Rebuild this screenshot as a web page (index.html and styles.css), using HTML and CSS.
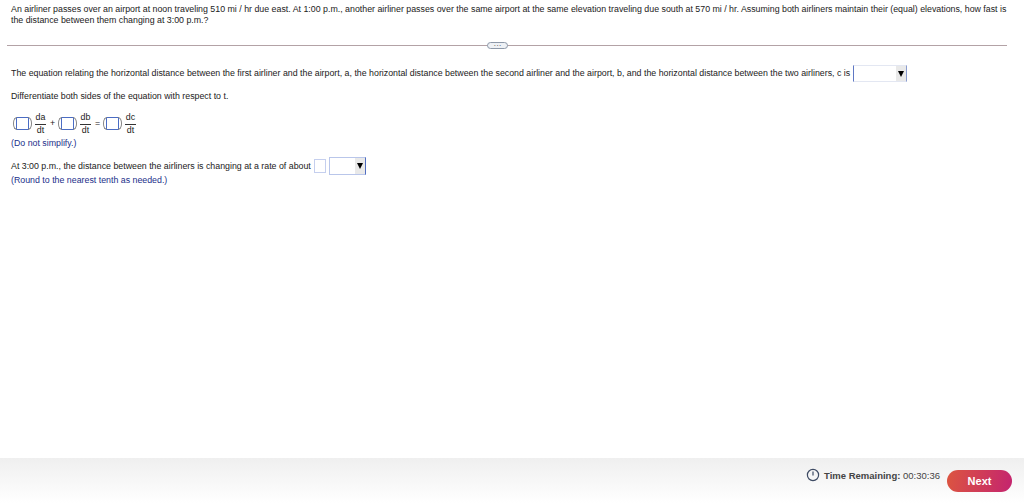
FILE: index.html

```html
<!DOCTYPE html>
<html>
<head>
    <meta http-equiv="Content-Type" content="text/html; charset=utf-8">
    <title>Question</title>
    <link rel="stylesheet" href="styles.css">
</head>
<body>
<div class="page">
    <div class="question">
        <p class="stem">An airliner passes over an airport at noon traveling 510 mi / hr due east. At 1:00 p.m., another airliner passes over the same airport at the same elevation traveling due south at 570 mi / hr. Assuming both airliners maintain their (equal) elevations, how fast is the distance between them changing at 3:00 p.m.?</p>

        <div class="divider">
            <span class="more">&middot;&middot;&middot;</span>
        </div>

        <div class="row row-first">
            <span>The equation relating the horizontal distance between the first airliner and the airport, a, the horizontal distance between the second airliner and the airport, b, and the horizontal distance between the two airliners, c is</span>
            <span class="select select-wide"><span class="arrow"></span></span>
        </div>

        <p class="line-diff">Differentiate both sides of the equation with respect to t.</p>

        <div class="equation">
            <span class="blank"></span>
            <span class="frac"><span class="num">da</span><span class="den">dt</span></span>
            <span class="op">+</span>
            <span class="blank"></span>
            <span class="frac"><span class="num">db</span><span class="den">dt</span></span>
            <span class="op">=</span>
            <span class="blank"></span>
            <span class="frac"><span class="num">dc</span><span class="den">dt</span></span>
        </div>
        <p class="hint">(Do not simplify.)</p>

        <div class="row row-rate">
            <span>At 3:00 p.m., the distance between the airliners is changing at a rate of about</span>
            <span class="input"></span>
            <span class="select select-small"><span class="arrow"></span></span>
        </div>
        <p class="hint hint-round">(Round to the nearest tenth as needed.)</p>
    </div>

    <div class="footer">
        <svg class="clock" width="14" height="14" viewBox="0 0 14 14">
            <circle cx="7" cy="7" r="5.6" fill="none" stroke="#3d4a63" stroke-width="1.2"/>
            <path d="M7 3.6V7.6" fill="none" stroke="#3d4a63" stroke-width="1.2"/>
        </svg>
        <span class="time"><b>Time Remaining:</b> 00:30:36</span>
        <span class="next">Next</span>
    </div>
</div>
</body>
</html>
```

FILE: styles.css

```css
html, body {
    margin: 0;
    padding: 0;
    background: #fff;
}
.page {
    display: flex;
    flex-direction: column;
    height: 503px;
    font-family: "Liberation Sans", Arial, sans-serif;
    font-size: 8.82px;
    line-height: 11px;
    color: #222;
}
.question {
    flex: 1;
    padding: 4px 11px 0;
}
p {
    margin: 0;
}

/* divider with the little pill left of the middle */
.divider {
    display: flex;
    justify-content: center;
    align-items: center;
    height: 1px;
    margin: 19px 6px 0 -4px;
    padding-right: 19px;
    background: #b3a2a6;
}
.more {
    box-sizing: border-box;
    width: 21px;
    height: 7px;
    border: 1px solid #8d98a8;
    border-radius: 4px;
    background: #eef1f5;
    font-size: 8px;
    line-height: 5px;
    text-align: center;
    color: #444;
}

.row {
    display: flex;
    align-items: center;
}
.row-first {
    margin-top: 19px;
    height: 17px;
}
.select {
    display: flex;
    justify-content: flex-end;
    align-items: center;
    box-sizing: border-box;
    background: #fff;
}
.select-wide {
    width: 54px;
    height: 17px;
    margin-left: 3px;
    border-left: 1px solid #5f78c4;
    border-right: 1px solid #8a9ccf;
    border-top: 1px solid #e3e7f2;
    border-bottom: 1px solid #e3e7f2;
}
.select-small {
    width: 37px;
    height: 18px;
    margin-left: 3px;
    border: 1px solid #b9c6ea;
    border-right: 1px solid #4f6cc0;
}
.arrow {
    display: flex;
    justify-content: center;
    align-items: center;
    width: 10px;
    height: 100%;
    background: #e9e9e9;
}
.arrow::after {
    content: "";
    border-left: 3px solid transparent;
    border-right: 3px solid transparent;
    border-top: 6px solid #000;
}
.line-diff {
    margin-top: 9px;
}

.equation {
    display: flex;
    align-items: center;
    height: 29px;
    margin-top: 7px;
    margin-left: 5px;
}
.blank {
    box-sizing: border-box;
    width: 13px;
    height: 13px;
    border: 1px solid #4a6cc4;
    position: relative;
    background: #fff;
}
/* round brackets beside the answer box */
.blank::before, .blank::after {
    content: "";
    position: absolute;
    top: -1px;
    width: 4px;
    height: 13px;
    box-sizing: border-box;
    border: 1px solid #888;
}
.blank::before {
    left: -4px;
    border-right: 0;
    border-radius: 4px 0 0 4px / 6px 0 0 6px;
}
.blank::after {
    right: -4px;
    border-left: 0;
    border-radius: 0 4px 4px 0 / 0 6px 6px 0;
}
.frac {
    display: flex;
    flex-direction: column;
    align-items: center;
    width: 11px;
    margin-left: 6px;
}
.num {
    border-bottom: 1px solid #333;
    width: 100%;
    text-align: center;
    padding-bottom: 1px;
}
.op {
    width: 13px;
    margin-right: 2px;
    text-align: center;
}

.hint {
    color: #1b2f8a;
}
.row-rate {
    margin-top: 8px;
    height: 18px;
}
.input {
    box-sizing: border-box;
    width: 12px;
    height: 14px;
    margin-left: 3px;
    border: 1px solid #c5cfee;
}

.footer {
    display: flex;
    justify-content: flex-end;
    align-items: center;
    box-sizing: border-box;
    height: 45px;
    padding: 0 12px 0 0;
    background: linear-gradient(#efefef, #fff);
}
.clock {
    margin: 0 4px 11px 0;
}
.time {
    margin-bottom: 11px;
    font-size: 9.5px;
    color: #444;
}
.next {
    width: 65px;
    height: 22px;
    margin-left: 7px;
    border-radius: 11px;
    background: linear-gradient(100deg, #dc5540, #c4246f);
    color: #fff;
    font-size: 11px;
    font-weight: bold;
    line-height: 22px;
    text-align: center;
}
```
